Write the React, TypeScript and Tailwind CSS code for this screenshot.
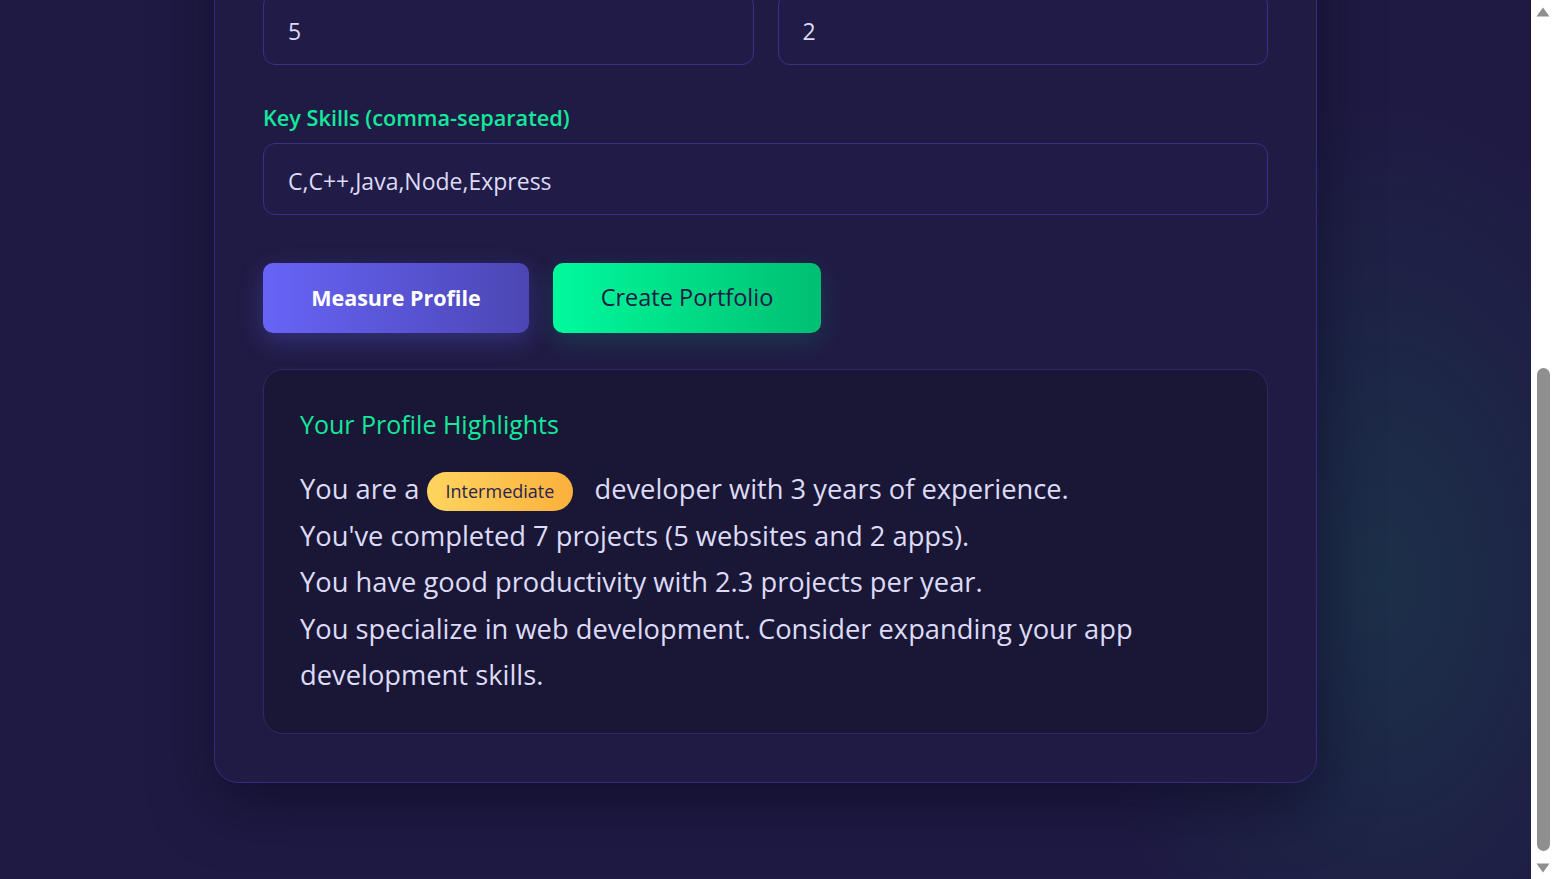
import { useLayoutEffect, useRef, useState } from 'react';

export default function App() {
  const [name, setName] = useState('Alex Carter');
  const [email, setEmail] = useState('alex@devmail.io');
  const [years, setYears] = useState('3');
  const [role, setRole] = useState('Full Stack Developer');
  const [websites, setWebsites] = useState('5');
  const [apps, setApps] = useState('2');
  const [skills, setSkills] = useState('C,C++,Java,Node,Express');
  const skillsRef = useRef<HTMLInputElement>(null);

  // page is shown scrolled down to the results
  useLayoutEffect(() => {
    const el = skillsRef.current;
    if (!el) return;
    const top = el.getBoundingClientRect().top + window.scrollY;
    window.scrollTo(0, top - 143);
  }, []);

  const inputCls =
    'w-full h-[72px] rounded-xl border border-[#3a3088] bg-[#211c47] px-6 pt-[3px] text-[23px] text-[#dcdaf5] outline-none';
  const labelCls = 'block mb-3 text-[21.7px] leading-[27px] font-semibold text-[#14e89b]';

  return (
    <main
      className="min-h-screen bg-[#1f1a44] bg-fixed bg-[radial-gradient(ellipse_300px_480px_at_89%_66%,#1c3049_0%,rgba(31,26,68,0)_100%)] pt-16 pb-[121px] pr-[23px] text-[#dcdaf5]"
      style={{ fontFamily: '"Open Sans", "Noto Sans", sans-serif' }}
    >
      <div className="mx-auto w-[1103px]">
        <h1 className="text-center text-5xl font-bold text-white">Developer Profile Meter</h1>
        <p className="mt-4 mb-12 text-center text-lg leading-7 text-[#a5a1d6]">
          Measure your experience and build a portfolio in seconds
        </p>

        <div className="rounded-3xl border border-[#352c80] bg-[#201b45] p-12 shadow-[0_20px_60px_rgba(10,8,30,0.55)]">
          <h2 className="mb-[10px] text-2xl leading-8 font-semibold text-white">Your Details</h2>

          <div className="flex flex-col gap-[39px]">
            <div className="grid grid-cols-2 gap-6">
              <div>
                <label className={labelCls}>Full Name</label>
                <input className={inputCls} value={name} onChange={(e) => setName(e.target.value)} />
              </div>
              <div>
                <label className={labelCls}>Email</label>
                <input className={inputCls} value={email} onChange={(e) => setEmail(e.target.value)} />
              </div>
            </div>
            <div className="grid grid-cols-2 gap-6">
              <div>
                <label className={labelCls}>Years of Experience</label>
                <input className={inputCls} value={years} onChange={(e) => setYears(e.target.value)} />
              </div>
              <div>
                <label className={labelCls}>Role</label>
                <input className={inputCls} value={role} onChange={(e) => setRole(e.target.value)} />
              </div>
            </div>
            <div className="grid grid-cols-2 gap-6">
              <div>
                <label className={labelCls}>Websites Built</label>
                <input className={inputCls} value={websites} onChange={(e) => setWebsites(e.target.value)} />
              </div>
              <div>
                <label className={labelCls}>Apps Built</label>
                <input className={inputCls} value={apps} onChange={(e) => setApps(e.target.value)} />
              </div>
            </div>
            <div>
              <label className={labelCls}>Key Skills (comma-separated)</label>
              <input
                ref={skillsRef}
                className={inputCls}
                value={skills}
                onChange={(e) => setSkills(e.target.value)}
              />
            </div>
          </div>

          <div className="mt-12 flex gap-6">
            <button className="h-[70px] w-[266px] rounded-[10px] bg-gradient-to-r from-[#6764f7] to-[#4c46b4] text-[21.5px] font-bold text-white shadow-[0_8px_24px_rgba(99,102,241,0.3)]">
              Measure Profile
            </button>
            <button className="h-[70px] w-[268px] rounded-[10px] bg-gradient-to-r from-[#00fa9c] to-[#00bf72] text-[23.5px] font-medium text-[#1e1a48] shadow-[0_8px_24px_rgba(0,230,150,0.15)]">
              Create Portfolio
            </button>
          </div>

          <div className="mt-9 rounded-[20px] border border-[#2e2868] bg-[#1a1736] px-9 pt-[34px] pb-[34px]">
            <h3 className="mb-[22px] text-[25px] leading-10 text-[#14e89b]">Your Profile Highlights</h3>
            <div className="text-[27.3px] leading-[46.5px] text-[#dddbf6]">
              <p>
                You are a{' '}
                <span className="mr-[14px] inline-block rounded-full bg-gradient-to-r from-[#fed55f] to-[#fbb03c] px-[19px] align-middle text-[18px] leading-[39px] font-medium text-[#2a2450]">
                  Intermediate
                </span>{' '}
                developer with 3 years of experience.
              </p>
              <p>You've completed 7 projects (5 websites and 2 apps).</p>
              <p>You have good productivity with 2.3 projects per year.</p>
              <p>You specialize in web development. Consider expanding your app development skills.</p>
            </div>
          </div>
        </div>
      </div>

      {/* browser scrollbar as it shows in the capture */}
      <div className="fixed top-0 right-0 flex h-screen w-[23px] flex-col items-center bg-white">
        <svg width="14" height="10" viewBox="0 0 14 10" className="mt-[7px] ml-[1px]">
          <path d="M7 0.5 L13.5 9.5 L0.5 9.5 Z" fill="#8f8f8f" />
        </svg>
        <div className="mt-[351px] ml-[1px] h-[483px] w-[13px] rounded-full bg-[#8f8f8f]" />
        <svg width="14" height="10" viewBox="0 0 14 10" className="mt-[12px] ml-[1px]">
          <path d="M0.5 0.5 L13.5 0.5 L7 9.5 Z" fill="#8f8f8f" />
        </svg>
      </div>
    </main>
  );
}
